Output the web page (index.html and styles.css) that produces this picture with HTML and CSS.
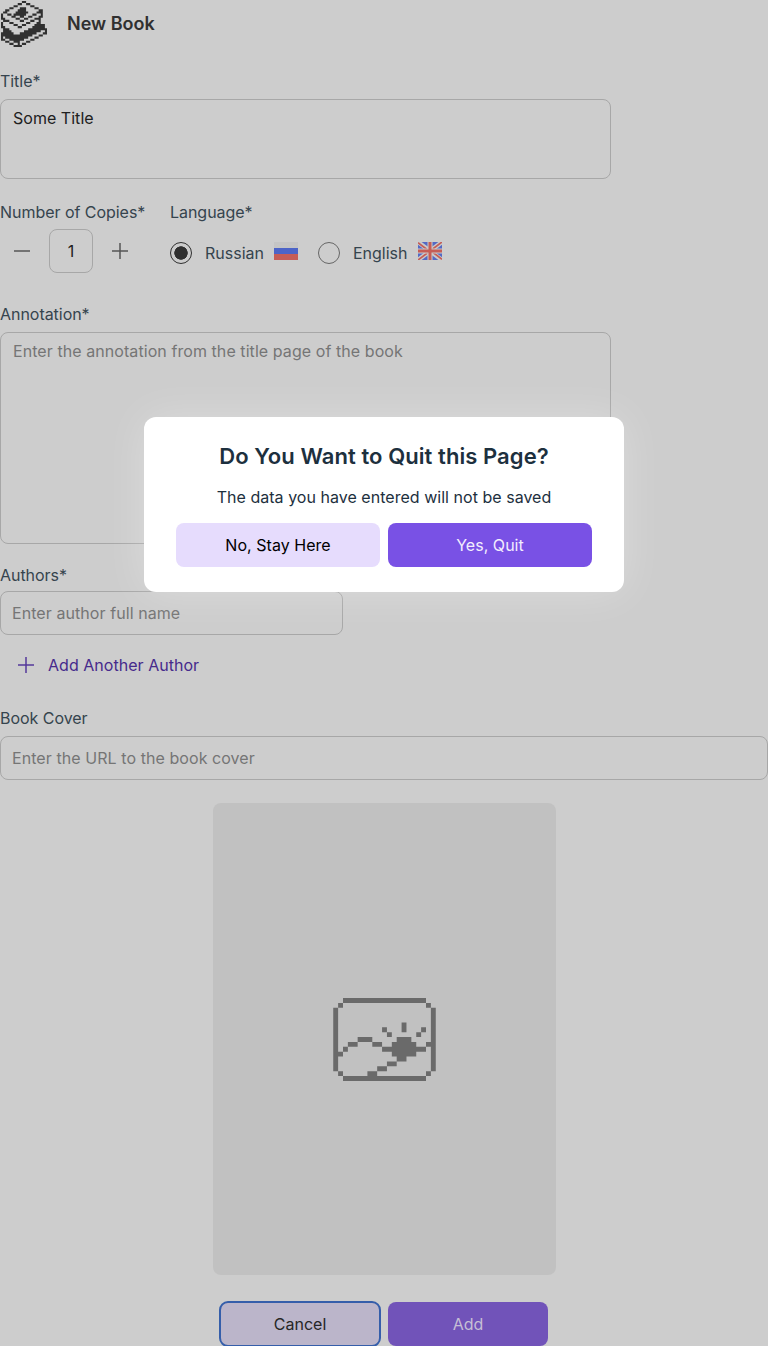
FILE: index.html
```html
<!DOCTYPE html>
<html lang="en">
<head>
<meta charset="utf-8">
<title>New Book</title>
<link rel="stylesheet" href="styles.css">
</head>
<body>
<main class="page">
  <header class="header">
    <svg class="logo" viewBox="0 0 22 22">
      <path d="M10 .5h2M8 1.5h2M12 1.5h2M6 2.5h2M14 2.5h2M4 3.5h2M9 3.5h3M16 3.5h2M2 4.5h2M8 4.5h4M18 4.5h2M1 5.5h2M7 5.5h6M17 5.5h3M0 6.5h1M3 6.5h2M6 6.5h6M15 6.5h2M19 6.5h1M0 7.5h1M5 7.5h2M9 7.5h2M13 7.5h2M18 7.5h2M0 8.5h2M7 8.5h2M11 8.5h2M16 8.5h2M18 8.5h1M1 9.5h3M9 9.5h2M14 9.5h2M18 9.5h1M0 10.5h1M4 10.5h2M12 10.5h2M17 10.5h2M0 11.5h1M6 11.5h2M10 11.5h2M16 11.5h5M0 12.5h2M8 12.5h2M15 12.5h6M1 13.5h3M13 13.5h9M1 14.5h4M11 14.5h8M21 14.5h1M0 15.5h6M9 15.5h8M20 15.5h2M0 16.5h15M18 16.5h2M0 17.5h1M2 17.5h11M16 17.5h2M0 18.5h2M4 18.5h7M14 18.5h2M2 19.5h2M6 19.5h3M12 19.5h2M4 20.5h2M8 20.5h1M10 20.5h2M6 21.5h4"/>
    </svg>
    <h1 class="heading">New Book</h1>
  </header>

  <label class="label label-title">Title*</label>
  <div class="field field-title">Some Title</div>

  <div class="options">
    <section class="copies">
      <div class="label">Number of Copies*</div>
      <div class="stepper">
        <svg class="sign" viewBox="0 0 16 16"><path d="M0 8h16"/></svg>
        <span class="count">1</span>
        <svg class="sign" viewBox="0 0 16 16"><path d="M0 8h16M8 0v16"/></svg>
      </div>
    </section>
    <section class="language">
      <div class="label">Language*</div>
      <div class="radios">
        <span class="radio radio-on"></span><span class="radio-text">Russian</span>
        <svg class="flag flag-ru" viewBox="0 0 24 18"><path fill="#c5c5c5" d="M0 0h24v6H0z"/><path fill="#4d64c7" d="M0 6h24v6H0z"/><path fill="#c65d56" d="M0 12h24v6H0z"/></svg>
        <span class="radio"></span><span class="radio-text">English</span>
        <svg class="flag" viewBox="0 0 24 18"><path fill="#5469c4" d="M0 0h24v18H0z"/><path stroke="#cacaca" stroke-width="4.4" d="M0 0l24 18M24 0L0 18"/><path stroke="#c65d56" stroke-width="1.7" d="M0 .8l10 7.5M24 0L14 7.5M24 17.2L14 9.7M0 18l10-7.5"/><path stroke="#cacaca" stroke-width="5" d="M12 0v18M0 9h24"/><path stroke="#c65d56" stroke-width="3" d="M12 0v18M0 9h24"/></svg>
      </div>
    </section>
  </div>

  <label class="label">Annotation*</label>
  <div class="field field-annotation placeholder">Enter the annotation from the title page of the book</div>

  <label class="label label-authors">Authors*</label>
  <div class="field field-author placeholder">Enter author full name</div>
  <div class="add-author">
    <svg class="sign" viewBox="0 0 16 16"><path d="M0 8h16M8 0v16"/></svg>
    <span>Add Another Author</span>
  </div>

  <label class="label label-cover">Book Cover</label>
  <div class="field field-cover placeholder">Enter the URL to the book cover</div>

  <div class="preview">
    <svg class="picture" viewBox="0 0 21 17">
      <path d="M2 .5h17M1 1.5h1M19 1.5h1M1 15.5h1M19 15.5h1M2 16.5h17M.5 2v13M20.5 2v13M14.5 5v2M10 6.5h1M11 7.5h1M18 6.5h1M17 7.5h1M5 8.5h3M3 9.5h2M8 9.5h2M2 10.5h1M1 11.5h1M10 10.5h9M19 9.5h1M13 8.5h3M12 9.5h5M12 11.5h5M13 12.5h2M11 13.5h2M9 14.5h2M7 15.5h2"/>
    </svg>
  </div>

  <footer class="actions">
    <button class="button cancel">Cancel</button>
    <button class="button add">Add</button>
  </footer>
</main>

<div class="dialog" role="dialog">
  <h2 class="dialog-title">Do You Want to Quit this Page?</h2>
  <p class="dialog-text">The data you have entered will not be saved</p>
  <div class="dialog-actions">
    <button class="button stay">No, Stay Here</button>
    <button class="button quit">Yes, Quit</button>
  </div>
</div>
</body>
</html>
```

FILE: styles.css
```css
* { box-sizing: border-box; }
body {
  margin: 0;
  height: 1346px;
  overflow: hidden;
  position: relative;
  background: #cdcdcd;
  color: #35444e;
  font: 400 16px/20px Inter, sans-serif;
  letter-spacing: .03px;
}
.page { display: flex; flex-direction: column; align-items: flex-start; }
.header { display: flex; align-items: center; height: 48px; gap: 20px; padding-left: 1px; }
.logo { width: 46px; height: 46px; }
.logo path { stroke: #303030; stroke-width: 1; fill: none; }
.heading { margin: 0; color: #303030; font-size: 18px; line-height: 24px; font-weight: 600; letter-spacing: 0; }
.label { display: block; color: #35444e; letter-spacing: -.04px; white-space: nowrap; }
.label-title { margin-top: 23px; }
.field { border: 1px solid #a7a7a7; border-radius: 8px; color: #202020; padding: 8px 12px; }
.placeholder { color: #757575; letter-spacing: .07px; }
.field-title { width: 611px; height: 80px; margin-top: 8px; }
.options { display: flex; gap: 25px; margin-top: 23px; height: 102px; }
.copies { width: 145px; }
.stepper { display: flex; align-items: center; gap: 19px; margin-top: 7px; padding-left: 14px; }
.sign { width: 16px; height: 16px; fill: none; stroke: #555; stroke-width: 1.5; }
.count { width: 44px; height: 44px; border: 1px solid #a7a7a7; border-radius: 8px; color: #202020; line-height: 43px; text-align: center; }
.radios { display: flex; align-items: center; height: 22px; margin-top: 20px; letter-spacing: 0; }
.radio { width: 22px; height: 22px; border: 1px solid #666; border-radius: 50%; margin-right: 13px; }
.radio-on { border-color: #303030; background: radial-gradient(circle, #303030 6.4px, transparent 7px); }
.flag { width: 24px; height: 18px; margin: -4px 0 0 10px; }
.flag-ru { margin-right: 20px; }
.field-annotation { width: 611px; height: 212px; margin-top: 8px; }
.label-authors { margin-top: 21px; }
.field-author { width: 343px; height: 44px; margin-top: 6px; padding: 11px; }
.add-author { display: flex; align-items: center; gap: 14px; height: 44px; margin-top: 8px; padding-left: 18px; color: #462a8c; }
.add-author .sign { stroke: #54389a; }
.label-cover { margin-top: 21px; }
.field-cover { width: 768px; height: 44px; margin-top: 8px; padding: 11px; }
.preview { display: flex; align-items: center; justify-content: center; align-self: center; width: 343px; height: 472px; margin-top: 23px; margin-left: 1px; border-radius: 8px; background: #c1c1c1; }
.picture { width: 103px; height: 83px; }
.picture path { stroke: #6a6a6a; stroke-width: 1; fill: none; }
.actions { display: flex; align-self: center; gap: 8px; margin-top: 27px; }
.button { width: 160px; height: 44px; padding: 0; border: 0; border-radius: 8px; font: inherit; letter-spacing: inherit; }
.cancel { background: #bbb5ca; color: #262626; outline: 2px solid #355eaa; outline-offset: -1px; }
.add { background: #7153b9; color: #c6bfd5; }
.dialog { position: absolute; left: 144px; top: 417px; width: 480px; height: 175px; padding: 24px 32px; border-radius: 12px; background: #fff; box-shadow: 0 0 44px rgba(255,255,255,.3); text-align: center; color: #1d303e; }
.dialog-title { margin: 0; font-size: 22px; line-height: 30px; font-weight: 600; letter-spacing: .07px; }
.dialog-text { margin: 16px 0; }
.dialog-actions { display: flex; gap: 8px; }
.dialog .button { width: 204px; }
.stay { background: #e6dcfd; color: #000; }
.quit { background: #7951e5; color: #f3eefe; }
```
